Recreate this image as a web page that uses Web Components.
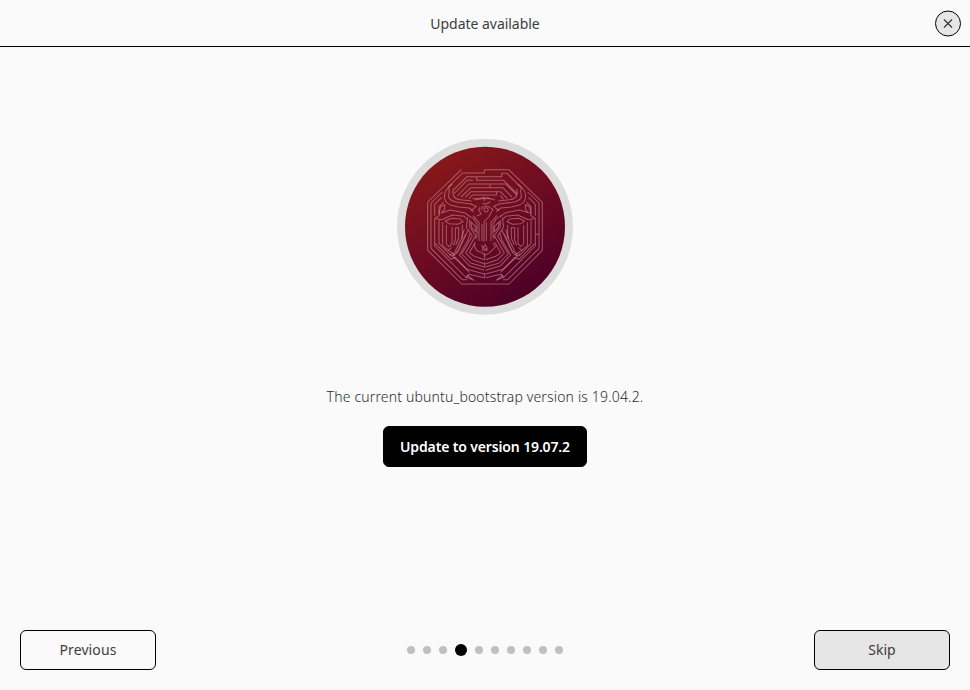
<!DOCTYPE html>
<html lang="en">
<head>
<meta charset="utf-8">
<title>Update available</title>
<style>
html,body{margin:0;height:100%;overflow:hidden}
body{background:#fafafa;color:#3d3d3d;font:14px/20px "Noto Sans","Open Sans",sans-serif}
</style>
</head>
<body>
<setup-wizard></setup-wizard>
<script>
function define(name, html) {
  customElements.define(name, class extends HTMLElement {
    constructor() {
      super();
      this.attachShadow({mode: 'open'}).innerHTML = html;
    }
  });
}

define('title-bar', `<style>
:host{display:grid;grid-template-columns:1fr auto 1fr;align-items:center;height:46px;border-bottom:1px solid #000;box-sizing:content-box}
.title{grid-column:2;font-size:14px;letter-spacing:-.03px;padding-top:2px}
button{justify-self:end;margin:0 9px 0 0;width:26px;height:26px;padding:0;border:1px solid #000;border-radius:50%;background:#e6e6e6;display:grid;place-items:center;transform:translateY(.5px)}
svg{display:block}
</style><span class="title"><slot></slot></span>
<button aria-label="Close"><svg width="10" height="10" viewBox="0 0 10 10"><path d="M1 1L9 9M9 1L1 9" stroke="#333" stroke-width="1.1" fill="none"/></svg></button>`);

define('release-mascot', `<style>:host{display:block;width:190px;height:190px}svg{display:block}</style>
<svg width="190" height="190" viewBox="0 0 570 570">
<defs>
<linearGradient id="g" x1=".24" y1=".07" x2=".76" y2=".93"><stop offset="0" stop-color="#861819"/><stop offset=".5" stop-color="#6c0b22"/><stop offset="1" stop-color="#4d0027"/></linearGradient>
<g id="half">
<path d="M18 250V114L52 81M18 250L112 344H126M29 152V118L50 97M29 160V243L122 336L147 346L126 330M42 165V236L79 273L90 268M42 148V125L56 112M31 236L78 283L91 277L133 322"/>
<path d="M71 66C55 82 52 106 74 119L100 126L133 129L146 140M82 58L71 66L73 82C66 98 76 108 97 112L140 117M85 72C80 92 88 102 106 104L140 108"/>
<path d="M42 148L46 126L59 119V133L48 144L76 135L118 143L134 154M30 160L50 164L82 150L118 154L126 162M30 160L44 150M60 168L80 160L106 162L114 170L98 178L72 176L60 168M53 172V242L70 256L80 247M64 180V237L72 245L81 236V186M91 188V225L85 241M91 188H101V220L92 240M112 179V216L91 258"/>
<path d="M128 158L124 186L142 213L110 267L137 294L178 306M134 164V185L152 212L122 264L142 284L178 296M129 196L117 222L98 262L83 274L126 313L178 327M136 203L129 226L103 270L133 302L178 316M151 232L133 263L148 274L178 284M70 256L90 270M122 207L98 258L74 270M118 193L109 220"/>
<path d="M138 137L154 124L138 118M130 152L146 161L156 178V210L152 222M144 152L162 172V228M137 170L152 185V201L140 187L137 170M150 105L178 97M123 338L132 328L178 338"/>
</g>
</defs>
<circle cx="285" cy="290" r="264" fill="#ddd"/>
<circle cx="285" cy="290" r="240" fill="url(#g)"/>
<g transform="translate(105 105)" fill="none" stroke="#dca2ab" stroke-opacity=".51" stroke-width="3.1" stroke-linejoin="round">
<path d="M109 14L8 111V256L110 357H252L352 256V112L251 14H178V24H113L71 65"/>
<path d="M86 74L126 35H230V25H246L288 67M86 87L126 46H144M155 37V46H236L276 86M97 93L132 57H242L276 91M108 96L138 68H195V58M196 68H233L262 97M121 97L138 80H226L247 101M132 101L142 90H215V80M225 92L236 103M142 101H197"/>
<use href="#half"/>
<use href="#half" transform="translate(360 0) scale(-1 1)"/>
<path d="M342 208H331M178 97V108M174 114L180 118L196 111M169 134C168 125 185 119 194 127L204 133L191 156L177 170V230M171 228V178M184 171V228M183 128A6.5 6.5 0 1 1 182.900 128M165 127L161 135L169 147L155 153M149 235C147 251 158 262 169 262L180 271L195 262L211 246L204 234M169 241L182 253H187L181 239L173 247V256H187M179 264V284M179 292V308M179 324V340"/>
</g>
</svg>`);

define('action-button', `<style>
:host{display:grid;place-items:center;box-sizing:border-box;width:136px;height:40px;border:1px solid #000;border-radius:6px;letter-spacing:.1px}
:host([filled]){background:#e6e6e6;letter-spacing:0}
:host([primary]){width:204px;height:41px;background:#000;color:#fff;font-weight:600;letter-spacing:-.14px}
</style><span><slot></slot></span>`);

define('page-dots', `<style>
:host{display:flex;align-items:center;gap:8px}
i{width:8px;height:8px;border-radius:50%;background:#c0c0c0}
i.on{width:12px;height:12px;background:#000}
</style><i></i><i></i><i></i><i class="on"></i><i></i><i></i><i></i><i></i><i></i><i></i>`);

define('setup-wizard', `<style>
:host{display:flex;flex-direction:column;height:690px;width:970px}
main{flex:1;display:flex;flex-direction:column;align-items:center;padding-top:83px}
p{margin:67px 0 19px;white-space:nowrap;font-weight:300;letter-spacing:.16px;color:#2c2c2c}
footer{display:grid;grid-template-columns:136px 1fr 136px;align-items:center;justify-items:center;padding:0 20px 20px}
</style>
<title-bar>Update available</title-bar>
<main><release-mascot></release-mascot>
<p>The current ubuntu_bootstrap version is 19.04.2.</p>
<action-button primary>Update to version 19.07.2</action-button></main>
<footer><action-button>Previous</action-button><page-dots></page-dots><action-button filled>Skip</action-button></footer>`);
</script>
</body>
</html>
